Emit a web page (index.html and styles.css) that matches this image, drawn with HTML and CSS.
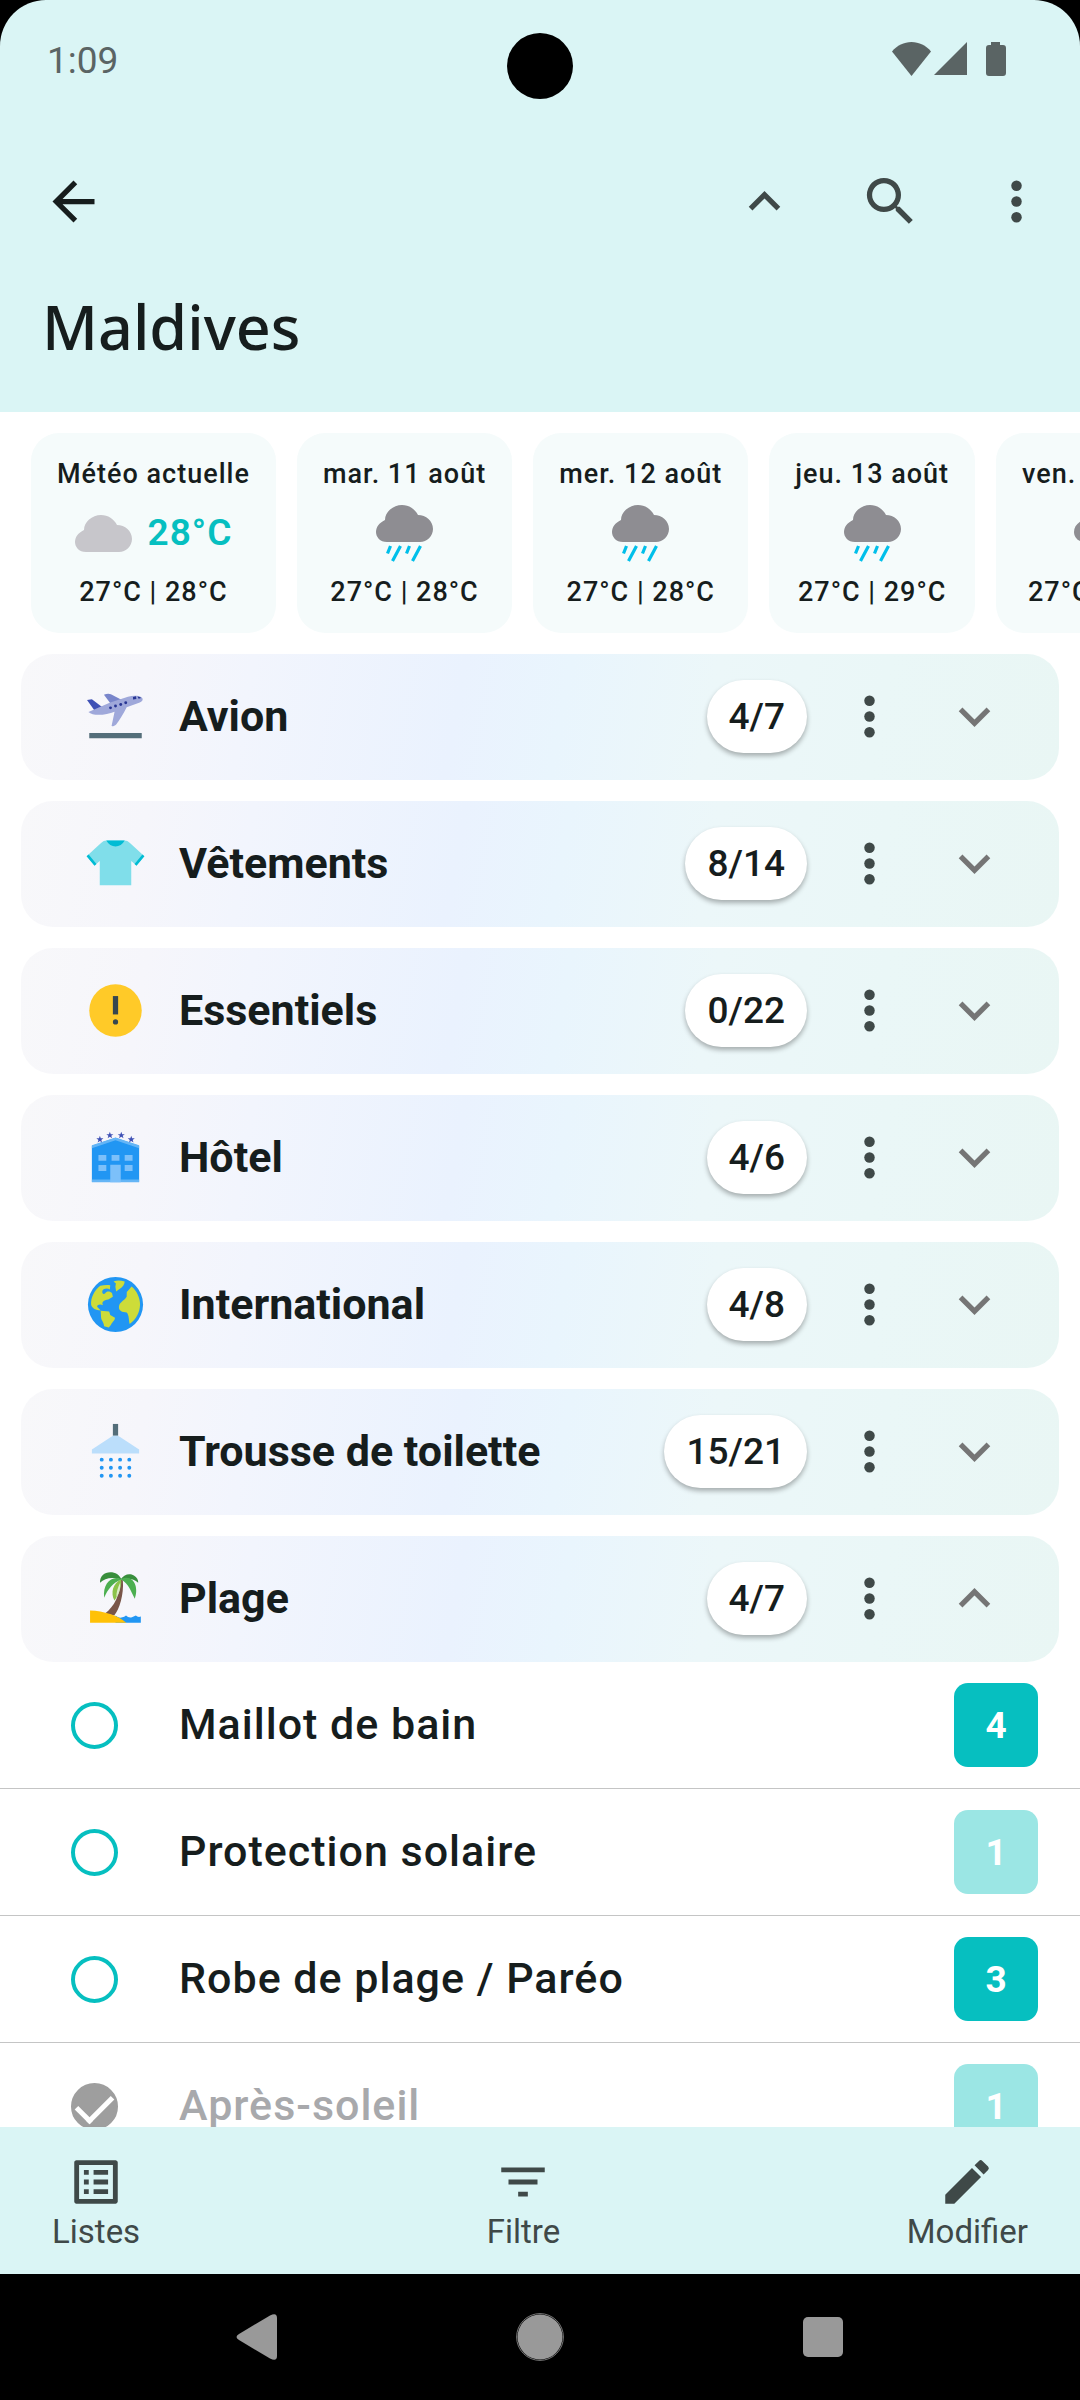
FILE: index.html
```html
<!DOCTYPE html>
<html lang="fr">
<head>
    <meta charset="UTF-8">
    <meta name="viewport" content="width=device-width, initial-scale=1.0">
    <title>Maldives</title>
    <link rel="stylesheet" href="styles.css">
</head>
<body>
    <!-- Shared icons -->
    <svg class="sprite" aria-hidden="true">
        <symbol id="dots" viewBox="0 0 24 24">
            <circle cx="12" cy="6" r="2"/><circle cx="12" cy="12" r="2"/><circle cx="12" cy="18" r="2"/>
        </symbol>
        <symbol id="up" viewBox="0 0 24 24"><path d="M12 8l-6 6 1.41 1.41L12 10.83l4.59 4.58L18 14z"/></symbol>
        <symbol id="down" viewBox="0 0 24 24"><path d="M16.59 8.59L12 13.17 7.41 8.59 6 10l6 6 6-6z"/></symbol>
        <symbol id="rain" viewBox="0 0 57 57">
            <path fill="#8e8d92" d="M11 37C4 37 0 32 0 27C0 22 3 18 9 15C9 7 17 0 26 0C33 0 39 4 42 10C50 10 57 16 57 24C57 31 51 37 44 37Z"/>
            <path stroke="#00bfea" stroke-width="3.2" fill="none" d="M14.5 41L11.5 48.5M24.5 41L16.5 56M33.5 41L30.5 48.5M44.5 41L36.5 56"/>
        </symbol>
    </svg>

    <header class="header">
        <div class="status-bar">
            <span class="time">1:09</span>
            <span class="camera"></span>
            <svg class="status-icons" viewBox="0 0 114 34" aria-hidden="true">
                <path d="M19.500 34L0 9.500C5 3.500 12 0 19.500 0S34 3.500 39 9.500Z"/>
                <path d="M75 0V33H42Z"/>
                <path d="M99 0h9v3h3q3 0 3 3v25q0 3-3 3H97q-3 0-3-3V6q0-3 3-3h2z"/>
            </svg>
        </div>
        <div class="toolbar">
            <button class="icon-btn back" aria-label="Retour">
                <svg viewBox="0 0 24 24"><path d="M20 11H7.830l5.590-5.590L12 4l-8 8 8 8 1.410-1.410L7.830 13H20z"/></svg>
            </button>
            <button class="icon-btn" aria-label="Tout replier"><svg><use href="#up"/></svg></button>
            <button class="icon-btn" aria-label="Rechercher">
                <svg viewBox="0 0 24 24"><path d="M15.500 14h-.79l-.28-.27A6.471 6.471 0 0 0 16 9.500 6.500 6.500 0 1 0 9.500 16c1.610 0 3.090-.59 4.230-1.570l.27.28v.79l5 4.990L20.490 19l-4.990-5zm-6 0C7.010 14 5 11.990 5 9.500S7.010 5 9.500 5 14 7.010 14 9.500 11.990 14 9.500 14z"/></svg>
            </button>
            <button class="icon-btn" aria-label="Plus d'options"><svg><use href="#dots"/></svg></button>
        </div>
        <h1>Maldives</h1>
    </header>

    <main class="content">
        <section class="weather">
            <div class="day">
                <span>Météo actuelle</span>
                <div class="now">
                    <svg class="sky" viewBox="0 -10 57 57"><path fill="#c7c6cb" d="M11 37C4 37 0 32 0 27C0 22 3 18 9 15C9 7 17 0 26 0C33 0 39 4 42 10C50 10 57 16 57 24C57 31 51 37 44 37Z"/></svg>
                    <strong>28°C</strong>
                </div>
                <span>27°C | 28°C</span>
            </div>
            <div class="day">
                <span>mar. 11 août</span>
                <div class="now"><svg class="sky"><use href="#rain"/></svg></div>
                <span>27°C | 28°C</span>
            </div>
            <div class="day">
                <span>mer. 12 août</span>
                <div class="now"><svg class="sky"><use href="#rain"/></svg></div>
                <span>27°C | 28°C</span>
            </div>
            <div class="day">
                <span>jeu. 13 août</span>
                <div class="now"><svg class="sky"><use href="#rain"/></svg></div>
                <span>27°C | 29°C</span>
            </div>
            <div class="day">
                <span>ven. 14 août</span>
                <div class="now"><svg class="sky"><use href="#rain"/></svg></div>
                <span>27°C | 29°C</span>
            </div>
        </section>

        <section class="categories">
            <div class="category">
                <svg class="cat-icon" viewBox="0 0 48 48">
                    <path fill="#546e7a" d="M4 36.500h40v4H4z"/>
                    <path fill="#3f51b5" d="M2.300 11.500L6 10.800L14 17L8 19.500Z"/>
                    <path fill="#7986cb" d="M15.200 7.500C17 6.500 19 6.300 20.500 7L30 12L20.500 14.500Z"/>
                    <path fill="#9fa8da" d="M3.400 20.500L20 13.400L33.500 9C37 8 42 7.800 44 9.500C45.500 11 44.500 12.500 42 13.600L32.500 17C30 22 27 27 24.500 30C23.500 31 22 31.500 21 31.300L23.300 20.300C17 22.800 7 24 3.400 20.500Z"/>
                    <g fill="#283593"><circle cx="20.200" cy="17.400" r="1.100"/><circle cx="24" cy="16" r="1.100"/><circle cx="28" cy="14.900" r="1.100"/><circle cx="31.800" cy="13.500" r="1.100"/><path d="M37.300 9.200l2.300-.6.300 2-2.500.5zM40.800 8.700q2 0 2.800 1.200l-2 .5z"/></g>
                </svg>
                <h2>Avion</h2>
                <span class="count">4/7</span>
                <button class="icon-btn" aria-label="Options"><svg><use href="#dots"/></svg></button>
                <button class="icon-btn toggle" aria-label="Déplier"><svg><use href="#down"/></svg></button>
            </div>
            <div class="category">
                <svg class="cat-icon" viewBox="0 0 48 48">
                    <path fill="#80deea" d="M17 6.500Q15 6.500 13 8.300L2 18.500L8 25.500L12 22V40.500H36V22L40 25.500L46 18.500L35 8.300Q33 6.500 31 6.500Z"/>
                    <path fill="#00bcd4" d="M17 6.500C20 12.500 28 12.500 31 6.500zM3.500 17.200L2 18.500L8 25.800L9.500 24.400zM44.500 17.200L46 18.500L40 25.800L38.500 24.400z"/>
                </svg>
                <h2>Vêtements</h2>
                <span class="count">8/14</span>
                <button class="icon-btn" aria-label="Options"><svg><use href="#dots"/></svg></button>
                <button class="icon-btn toggle" aria-label="Déplier"><svg><use href="#down"/></svg></button>
            </div>
            <div class="category">
                <svg class="cat-icon" viewBox="0 0 48 48">
                    <circle cx="24" cy="24" r="20" fill="#ffca28"/>
                    <path fill="#37474f" d="M22 13h4v14h-4z"/><circle cx="24" cy="32.700" r="2" fill="#37474f"/>
                </svg>
                <h2>Essentiels</h2>
                <span class="count">0/22</span>
                <button class="icon-btn" aria-label="Options"><svg><use href="#dots"/></svg></button>
                <button class="icon-btn toggle" aria-label="Déplier"><svg><use href="#down"/></svg></button>
            </div>
            <div class="category">
                <svg class="cat-icon" viewBox="0 0 48 48">
                    <path fill="#2196f3" d="M6 42.500V15L24 9L42 15V42.500Z"/>
                    <path fill="#64b5f6" d="M6 17V14.600L24 8.800L42 14.600V17L24 10.800ZM6 40.800h36v2H6z"/>
                    <path fill="#7cc0fa" d="M11 22h6v4.500h-6zM21 22h6v4.500h-6zM31 22h6v4.500h-6zM11 29.700h6v4.500h-6zM31 29.700h6v4.500h-6zM20 29.500h8v13.300h-8z"/>
                    <g fill="#3f51b5">
                        <path id="star" d="M12.100 7.500l.7 1.900h2l-1.600 1.200.6 2-1.700-1.200-1.700 1.200.6-2-1.600-1.200h2z"/>
                        <use href="#star" x="7.600" y="-3.200"/><use href="#star" x="16.300" y="-3.200"/><use href="#star" x="23.900"/>
                    </g>
                </svg>
                <h2>Hôtel</h2>
                <span class="count">4/6</span>
                <button class="icon-btn" aria-label="Options"><svg><use href="#dots"/></svg></button>
                <button class="icon-btn toggle" aria-label="Déplier"><svg><use href="#down"/></svg></button>
            </div>
            <div class="category">
                <svg class="cat-icon" viewBox="0 0 48 48">
                    <circle cx="24" cy="24" r="21" fill="#2196f3"/>
                    <g fill="#cddc39">
                        <path d="M5.400 24C5 19 8 13 12.400 9.800C15 9 18 9 20 9.300L19.700 12.500C18 11.500 15 11.500 14 13.600C13.500 16 15 16.500 16.200 15.500C17 13.500 20 13.500 21.400 15.500L22 18L18.500 20.200C15 20.500 13 22.500 14.600 24.600C12.500 23.500 10 24 10 25.800L12.800 28.500C9 28.500 6 27 5.400 24Z"/>
                        <path d="M12.700 28.800L19.200 29.400L20 32L23.600 34C23.500 36.500 21 37.500 20.600 39.500L18.900 41.600L15.300 40.500C15 37 13 36 13 33.500Z"/>
                        <path d="M22.500 6.500C25 5.400 28 5.600 31 6.500C31 8.500 29.500 11 26.500 12.500L24.500 14L23.900 10.500L24.300 8Z"/>
                        <path d="M36.200 10.200C40 13 42.800 19 42.700 24C42.500 30 40 35 34.800 38.800C34 36 34.500 32 32.500 30L29 29.500C26.500 28.500 26 26 27.300 23.500C28.500 21.500 31 20.500 32.500 18L32.600 14.500L34 13Z"/>
                    </g>
                </svg>
                <h2>International</h2>
                <span class="count">4/8</span>
                <button class="icon-btn" aria-label="Options"><svg><use href="#dots"/></svg></button>
                <button class="icon-btn toggle" aria-label="Déplier"><svg><use href="#down"/></svg></button>
            </div>
            <div class="category">
                <svg class="cat-icon" viewBox="0 0 48 48">
                    <path fill="#546e7a" d="M22 3h4v9h-4z"/>
                    <path fill="#bbdefb" d="M6 25.500V22.500L22 12h4L42 22.500V25.500Z"/>
                    <path stroke="#2196f3" stroke-width="3" stroke-linecap="round" stroke-dasharray="0 7" d="M13.500 30.200h22M13.500 36.400h22M13.500 42.500h22"/>
                </svg>
                <h2>Trousse de toilette</h2>
                <span class="count">15/21</span>
                <button class="icon-btn" aria-label="Options"><svg><use href="#dots"/></svg></button>
                <button class="icon-btn toggle" aria-label="Déplier"><svg><use href="#down"/></svg></button>
            </div>
            <div class="category">
                <svg class="cat-icon" viewBox="0 0 48 48">
                    <path fill="#2196f3" d="M24 37q2 2 4.500 1.500q2.500-.3 3.500-1.500q2 2 4.500 1.300l3-1.300q1.500 1.500 3.800.8V42.500H24z"/>
                    <path fill="#795548" d="M27.300 9.500L29.600 10C30.500 21 27 32 23 37L16 35.500C23 30 28 21 27.300 9.500Z"/>
                    <path fill="#ffc107" d="M4.600 33.200C15 33.500 26 37 32.300 42.500H4.600Z"/>
                    <path fill="#8bc34a" d="M28.300 9.500C22 12 20 20 23.200 25.500C26 22 29 15 28.300 9.500Z"/>
                    <path fill="#dcedc8" d="M27.500 12C25.500 16 24.500 20 24.700 23C27 20 28 16 27.500 12Z"/>
                    <path fill="#388e3c" d="M12.200 12C12 7 15.500 4 20 4C24 4 27 6 28.300 9C30.500 5.500 35 4.500 38 6.500C40.300 8 41.500 10 41.300 12C38 8.500 33 8.500 28.300 9.500C22 7.500 16 8 12.200 12Z"/>
                    <path fill="#4caf50" d="M28.300 9.200C21 6 14 13 15.400 23.500C18 17 22 12 28.300 9.500C34 12.500 36 19 38.700 24.100C42 16 38 5 28.300 9.200Z"/>
                </svg>
                <h2>Plage</h2>
                <span class="count">4/7</span>
                <button class="icon-btn" aria-label="Options"><svg><use href="#dots"/></svg></button>
                <button class="icon-btn toggle" aria-label="Replier"><svg><use href="#up"/></svg></button>
            </div>
        </section>

        <ul class="items">
            <li class="item">
                <input type="checkbox" id="maillot">
                <label for="maillot">Maillot de bain</label>
                <button class="qty">4</button>
            </li>
            <li class="item">
                <input type="checkbox" id="protection">
                <label for="protection">Protection solaire</label>
                <button class="qty single">1</button>
            </li>
            <li class="item">
                <input type="checkbox" id="robe">
                <label for="robe">Robe de plage / Paréo</label>
                <button class="qty">3</button>
            </li>
            <li class="item">
                <input type="checkbox" id="apres" checked>
                <label for="apres">Après-soleil</label>
                <button class="qty single">1</button>
            </li>
        </ul>
    </main>

    <nav class="bottom-bar">
        <button class="tab">
            <svg viewBox="0 0 24 24"><path d="M19 5v14H5V5h14m1.100-2H3.900c-.5 0-.9.4-.9.900v16.200c0 .4.4.9.9.9h16.200c.4 0 .9-.5.9-.9V3.900c0-.5-.5-.9-.9-.9zM11 7h6v2h-6V7zm0 4h6v2h-6v-2zm0 4h6v2h-6zM7 7h2v2H7zm0 4h2v2H7zm0 4h2v2H7z"/></svg>
            <span>Listes</span>
        </button>
        <button class="tab">
            <svg viewBox="0 0 24 24"><path d="M10 18h4v-2h-4v2zM3 6v2h18V6H3zm3 7h12v-2H6v2z"/></svg>
            <span>Filtre</span>
        </button>
        <button class="tab">
            <svg viewBox="0 0 24 24"><path d="M3 17.250V21h3.750L17.810 9.940l-3.750-3.750L3 17.250zM20.710 7.040a1 1 0 0 0 0-1.410l-2.340-2.340a1 1 0 0 0-1.410 0l-1.830 1.830 3.750 3.750 1.830-1.830z"/></svg>
            <span>Modifier</span>
        </button>
    </nav>

    <div class="system-nav">
        <button aria-label="Retour"><svg viewBox="0 0 48 48"><path d="M6 21L37 2.500Q44 -1 44 5V43Q44 49 37 45.500L6 27Q1 24 6 21Z"/></svg></button>
        <button aria-label="Accueil"><svg viewBox="0 0 48 48"><circle cx="24" cy="24" r="22.500"/><circle class="ring" cx="24" cy="24" r="23.400"/></svg></button>
        <button aria-label="Applications récentes"><svg viewBox="0 0 48 48"><rect x="4" y="4" width="40" height="40" rx="5"/></svg></button>
    </div>
</body>
</html>
```

FILE: styles.css
```css
* {
    box-sizing: border-box;
}

body {
    margin: 0;
    height: 100vh;
    display: flex;
    flex-direction: column;
    font-family: Roboto, "Liberation Sans", sans-serif;
    background-color: #000;
    color: #161d1d;
}

button {
    padding: 0;
    border: none;
    background: none;
    font-family: inherit;
    color: #3f4948;
    cursor: pointer;
}

svg {
    display: block;
    fill: currentColor;
}

.sprite {
    position: absolute;
    width: 0;
    height: 0;
}

/* Header */
.header {
    background-color: #daf5f5;
    border-radius: 46px 46px 0 0;
}

.status-bar {
    position: relative;
    display: flex;
    align-items: center;
    justify-content: space-between;
    height: 117px;
    padding: 0 74px 0 47px;
    color: #5a6464;
}

.time {
    padding-top: 4px;
    font-size: 37px;
}

.camera {
    position: absolute;
    top: 33px;
    left: 50%;
    width: 66px;
    height: 66px;
    border-radius: 50%;
    background-color: #000;
    transform: translateX(-50%);
}

.status-icons {
    width: 114px;
    height: 34px;
}

.toolbar {
    display: flex;
    align-items: center;
    gap: 63px;
    height: 168px;
    padding: 0 32px 0 42px;
}

.icon-btn,
.icon-btn svg {
    width: 63px;
    height: 63px;
}

.back {
    margin-right: auto;
    color: #161d1d;
}

h1 {
    margin: 0;
    padding: 0 42px 43px;
    font-family: "Noto Sans", sans-serif;
    font-size: 61px;
    font-weight: 500;
    line-height: 84px;
}

/* Content */
.content {
    flex: 1;
    min-height: 0;
    overflow-y: auto;
    scrollbar-width: none;
    background-color: #fff;
}

.weather {
    display: flex;
    gap: 21px;
    padding: 21px 31px;
    overflow-x: auto;
    scrollbar-width: none;
}

.day {
    flex: none;
    display: flex;
    flex-direction: column;
    align-items: center;
    gap: 14px;
    padding: 26px;
    border-radius: 28px;
    background-color: #f5fbfb;
    font-size: 27px;
    font-weight: 500;
    line-height: 30px;
    letter-spacing: 1px;
}

.now {
    display: flex;
    align-items: center;
    gap: 16px;
    height: 60px;
}

.now strong {
    font-size: 37px;
    font-weight: 600;
    color: #06bfc0;
}

.sky {
    width: 57px;
    height: 57px;
}

.categories {
    display: flex;
    flex-direction: column;
    gap: 21px;
    padding: 0 21px;
}

.category {
    display: flex;
    align-items: center;
    height: 126px;
    padding: 0 53px 2px 63px;
    border-radius: 32px;
    background: linear-gradient(100deg, #f8f8fa 0%, #f6f6fb 12%, #f2f5fd 22%, #eaf2fe 42%, #e9f5fd 52%, #ecf7f9 66%, #eaf7f7 82%, #e9f6f4 100%);
}

.cat-icon {
    width: 63px;
    height: 63px;
}

.category h2 {
    flex: 1;
    margin: 0 0 0 32px;
    font-size: 43px;
    font-weight: 700;
}

.count {
    height: 73px;
    margin-right: 31px;
    padding: 0 22px;
    border-radius: 37px;
    background-color: #fff;
    box-shadow: 0 3px 5px rgba(0, 0, 0, 0.3);
    font-size: 37px;
    font-weight: 500;
    line-height: 73px;
}

.toggle {
    margin-left: 42px;
    color: #757575;
}

/* Packing items */
.items {
    margin: 0;
    padding: 0;
    list-style: none;
}

.item {
    display: flex;
    align-items: center;
    height: 127px;
    padding: 0 42px 0 71px;
    border-bottom: 1px solid #c4c5c5;
}

.item input {
    appearance: none;
    display: grid;
    place-items: center;
    width: 47px;
    height: 47px;
    margin: 0;
    border: 4px solid #06bfc0;
    border-radius: 50%;
}

.item input:checked {
    border-color: #9e9e9e;
    background-color: #9e9e9e;
}

.item input:checked::after {
    content: "";
    width: 16px;
    height: 30px;
    margin-bottom: 10px;
    border: solid #fff;
    border-width: 0 5px 5px 0;
    transform: rotate(45deg);
}

.item label {
    flex: 1;
    margin-left: 61px;
    padding-bottom: 2px;
    font-size: 43px;
    font-weight: 500;
    letter-spacing: 1px;
}

.item input:checked + label {
    color: #a8a9ac;
}

.qty {
    width: 84px;
    height: 84px;
    border-radius: 14px;
    background-color: #06bfc0;
    color: #fff;
    font-size: 37px;
    font-weight: 700;
}

.single {
    background-color: #9be6e4;
}

/* Bottom navigation */
.bottom-bar {
    display: flex;
    justify-content: space-between;
    padding: 26px 52px 24px;
    background-color: #daf5f5;
}

.tab {
    display: flex;
    flex-direction: column;
    align-items: center;
    gap: 3px;
    font-size: 33px;
    line-height: 36px;
}

.tab svg {
    width: 58px;
    height: 58px;
}

.system-nav {
    display: flex;
    align-items: center;
    justify-content: center;
    gap: 235px;
    height: 126px;
}

.system-nav button {
    color: #999;
}

.system-nav svg {
    width: 48px;
    height: 48px;
}

.ring {
    fill: none;
    stroke: #777;
    stroke-width: 1;
}
```
